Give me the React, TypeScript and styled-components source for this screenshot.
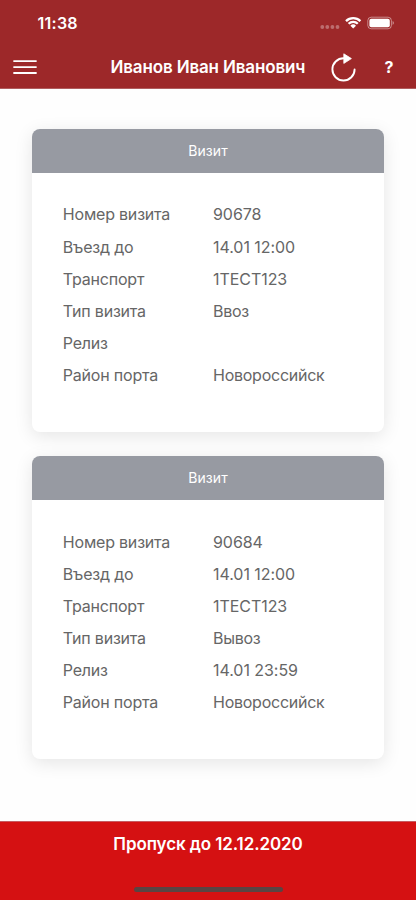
import React from "react";
import styled, { createGlobalStyle } from "styled-components";

const GlobalStyle = createGlobalStyle`
  * { box-sizing: border-box; }
  body { margin: 0; background: #fff; }
  button { appearance: none; border: 0; padding: 0; background: none; color: inherit; font: inherit; }
`;

const Screen = styled.div`
  display: flex;
  flex-direction: column;
  width: 416px;
  height: 900px;
  overflow: hidden;
  background: #fefefe;
  font-family: Inter, "Liberation Sans", sans-serif;
`;

const Header = styled.header`
  flex: none;
  height: 89px;
  background: #9d2829;
  border-bottom: 1px solid #b05c5d;
  color: #fff;
`;

const StatusBar = styled.div`
  display: flex;
  align-items: center;
  justify-content: space-between;
  height: 46px;
  padding: 0 22px 0 37.5px;
`;

const Clock = styled.time`
  font-size: 16px;
  font-weight: 600;
  line-height: 20px;
  letter-spacing: 0.25px;
`;

const Indicators = styled.div`
  display: flex;
  align-items: center;

  svg { display: block; }
`;

const NavBar = styled.nav`
  display: grid;
  grid-template-columns: 50px 316px 50px;
  height: 42px;
`;

const Title = styled.h1`
  margin: 0;
  padding-left: 60.5px;
  font-size: 17px;
  font-weight: 600;
  line-height: 42px;
  letter-spacing: -0.15px;
  white-space: nowrap;
`;

const TitleGroup = styled.div`
  display: grid;
  grid-template-columns: 278px 38px;
`;

const IconButton = styled.button`
  display: flex;
  align-items: center;
  justify-content: flex-start;
`;

const MenuButton = styled(IconButton)`
  padding-left: 13px;
`;

const HelpButton = styled(IconButton)`
  padding-left: 18.5px;
  font-size: 16px;
  font-weight: 700;
`;

const Visits = styled.main`
  flex: 1;
  display: flex;
  flex-direction: column;
  gap: 23.9px;
  padding: 39.6px 32.3px 0;
`;

const Card = styled.section`
  flex: none;
  height: 303.3px;
  border-radius: 8px;
  background: #fff;
  box-shadow: 0 4px 18px rgba(0, 0, 0, 0.1);
  overflow: hidden;
`;

const CardTitle = styled.h2`
  margin: 0;
  height: 44.3px;
  background: #979aa2;
  color: #fff;
  font-size: 14px;
  font-weight: 400;
  line-height: 43px;
  letter-spacing: 0.1px;
  text-align: center;
`;

const Details = styled.dl`
  display: grid;
  grid-template-columns: 150.2px 1fr;
  grid-auto-rows: 32.1px;
  margin: 0;
  padding: 25.6px 0 0 30.5px;
  color: #666;
  font-size: 16px;
  line-height: 32px;
`;

const Label = styled.dt`
  letter-spacing: -0.2px;
`;

const Value = styled.dd<{ $numeric: boolean }>`
  margin: 0;
  letter-spacing: ${({ $numeric }) => ($numeric ? "-0.05px" : "-0.25px")};
`;

const Footer = styled.footer`
  flex: none;
  display: flex;
  flex-direction: column;
  align-items: center;
  justify-content: space-between;
  height: 79px;
  padding: 11px 0 8px;
  background: #d51112;
  border-top: 1px solid #c65c61;
  color: #fff;
  font-size: 17px;
  font-weight: 600;
  line-height: 22px;
  letter-spacing: -0.1px;
`;

const HomeIndicator = styled.div`
  width: 149px;
  height: 5.5px;
  border-radius: 3px;
  background: #594443;
`;

type Visit = { id: string; rows: [string, string][] };

const visits: Visit[] = [
  {
    id: "90678",
    rows: [
      ["Номер визита", "90678"],
      ["Въезд до", "14.01 12:00"],
      ["Транспорт", "1ТЕСТ123"],
      ["Тип визита", "Ввоз"],
      ["Релиз", ""],
      ["Район порта", "Новороссийск"],
    ],
  },
  {
    id: "90684",
    rows: [
      ["Номер визита", "90684"],
      ["Въезд до", "14.01 12:00"],
      ["Транспорт", "1ТЕСТ123"],
      ["Тип визита", "Вывоз"],
      ["Релиз", "14.01 23:59"],
      ["Район порта", "Новороссийск"],
    ],
  },
];

const StatusIcons = () => (
  <svg width="76" height="16" viewBox="0 0 76 16" fill="#fff">
    <g opacity="0.32">
      <circle cx="4.3" cy="12" r="1.9" />
      <circle cx="9.3" cy="12" r="1.9" />
      <circle cx="14.4" cy="12" r="1.9" />
      <circle cx="19.5" cy="12" r="1.9" />
    </g>
    <path d="M27.2 5.2a11.4 11.4 0 0 1 16 0l-1.6 1.7a9.2 9.2 0 0 0-12.8 0Z" />
    <path d="M29.8 7.9a7.7 7.7 0 0 1 10.8 0L39 9.6a5.5 5.5 0 0 0-7.6 0Z" />
    <path d="M32.4 10.7a4 4 0 0 1 5.6 0l-2.8 2.8Z" />
    <rect x="49.8" y="2.2" width="23.6" height="11.6" rx="3.4" fill="none" stroke="#fff" strokeOpacity="0.45" />
    <rect x="51.4" y="3.8" width="20.4" height="8.4" rx="2" />
    <path d="M74.6 6.1q1.3.6 1.3 1.9t-1.3 1.9Z" opacity="0.5" />
  </svg>
);

const MenuIcon = () => (
  <svg width="24" height="16" viewBox="0 0 24 16" stroke="#fff" strokeWidth="1.8" strokeLinecap="round">
    <path d="M1 2.1h22M1 8.1h22M1 14h22" />
  </svg>
);

const RefreshIcon = () => (
  <svg width="28" height="30" viewBox="0 0 28 30" fill="none">
    <path d="M15.6 6.3A11.1 11.1 0 1 0 26.6 17.4" stroke="#fff" strokeWidth="1.9" strokeLinecap="round" />
    <path d="M15.8 1.8 23.4 6.6 15.8 11.4Z" fill="#fff" stroke="#fff" strokeWidth="0.8" strokeLinejoin="round" />
  </svg>
);

const VisitCard = ({ visit }: { visit: Visit }) => (
  <Card>
    <CardTitle>Визит</CardTitle>
    <Details>
      {visit.rows.map(([label, value]) => (
        <React.Fragment key={label}>
          <Label>{label}</Label>
          <Value $numeric={/\d/.test(value)}>{value}</Value>
        </React.Fragment>
      ))}
    </Details>
  </Card>
);

export default function App() {
  return (
    <Screen>
      <GlobalStyle />
      <Header>
        <StatusBar>
          <Clock>11:38</Clock>
          <Indicators>
            <StatusIcons />
          </Indicators>
        </StatusBar>
        <NavBar>
          <MenuButton aria-label="Меню">
            <MenuIcon />
          </MenuButton>
          <TitleGroup>
            <Title>Иванов Иван Иванович</Title>
            <IconButton aria-label="Обновить">
              <RefreshIcon />
            </IconButton>
          </TitleGroup>
          <HelpButton aria-label="Помощь">?</HelpButton>
        </NavBar>
      </Header>
      <Visits>
        {visits.map((visit) => (
          <VisitCard key={visit.id} visit={visit} />
        ))}
      </Visits>
      <Footer>
        <span>Пропуск до 12.12.2020</span>
        <HomeIndicator />
      </Footer>
    </Screen>
  );
}
